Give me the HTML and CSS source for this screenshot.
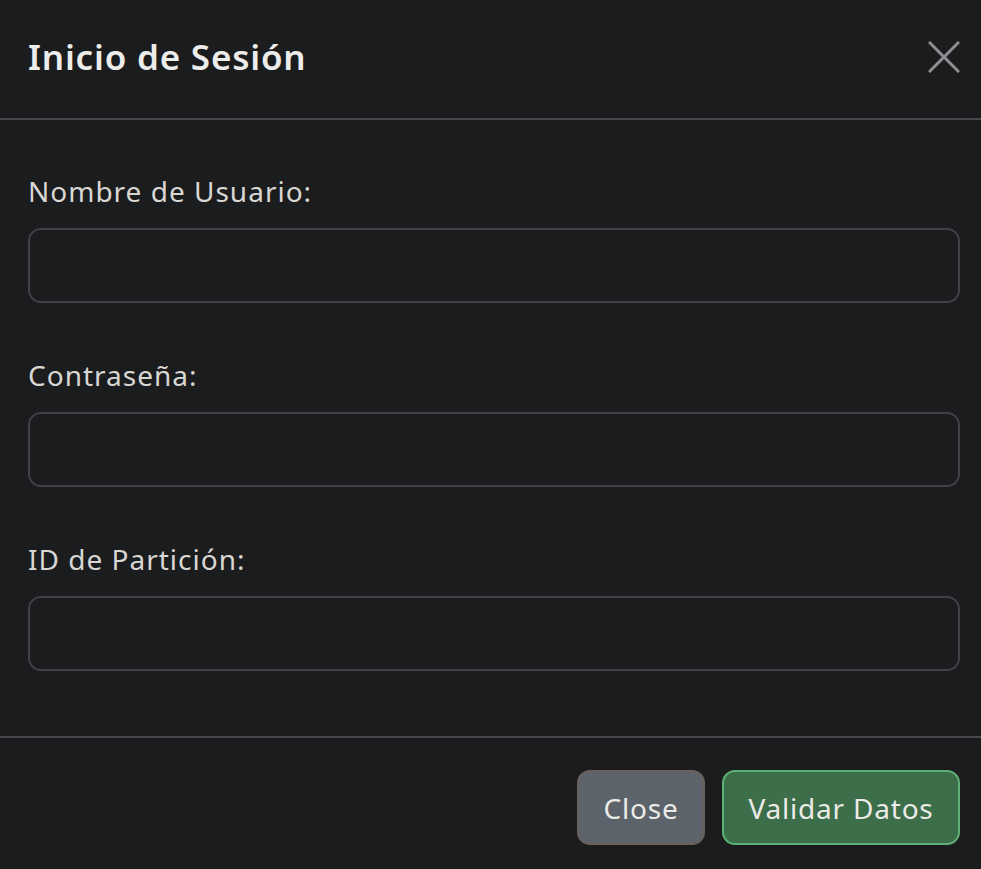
FILE: index.html
```html
<!DOCTYPE html>
<html lang="es">
<head>
<meta charset="utf-8">
<title>Inicio de Sesión</title>
<link rel="stylesheet" href="styles.css">
</head>
<body>
<div class="modal">
  <header class="modal-header">
    <h5 class="modal-title">Inicio de Sesión</h5>
    <button class="btn-close" type="button" aria-label="Close">
      <svg viewBox="0 0 32 32" width="32" height="32"><path d="M1 1L31 31M31 1L1 31" stroke="currentColor" stroke-width="3" fill="none"/></svg>
    </button>
  </header>
  <div class="modal-body">
    <div class="field">
      <label class="form-label" for="u">Nombre de Usuario:</label>
      <input class="form-control" id="u" type="text">
    </div>
    <div class="field">
      <label class="form-label" for="p">Contraseña:</label>
      <input class="form-control" id="p" type="password">
    </div>
    <div class="field">
      <label class="form-label" for="i">ID de Partición:</label>
      <input class="form-control" id="i" type="text">
    </div>
  </div>
  <footer class="modal-footer">
    <button class="btn btn-secondary" type="button">Close</button>
    <button class="btn btn-success" type="button">Validar Datos</button>
  </footer>
</div>
</body>
</html>
```
FILE: styles.css
```css
html, body {
  margin: 0;
  padding: 0;
  background: #1b1c1e;
  overflow: hidden;
}
body {
  font-family: "Noto Sans", "Open Sans", sans-serif;
  color: #dee2e6;
}
.modal {
  width: 981px;
  height: 869px;
  display: flex;
  flex-direction: column;
}
.modal-header {
  height: 120px;
  flex: none;
  box-sizing: border-box;
  border-bottom: 2px solid #45474a;
  display: flex;
  align-items: center;
  justify-content: space-between;
  padding: 0 21px 4px 28px;
}
.modal-title {
  margin: 0;
  font-size: 35px;
  font-weight: 600;
  letter-spacing: 0.8px;
  color: #ececea;
  line-height: 1;
  padding-bottom: 2px;
}
.btn-close {
  background: none;
  border: 0;
  padding: 0;
  color: #8d8e90;
  width: 32px;
  height: 32px;
  display: flex;
}
.modal-body {
  flex: none;
  padding: 52px 21px 0 28px;
  display: flex;
  flex-direction: column;
  gap: 53px;
  height: 618px;
  box-sizing: border-box;
  border-bottom: 2px solid #45474a;
}
.field {
  display: flex;
  flex-direction: column;
}
.form-label {
  font-size: 28px;
  line-height: 38px;
  margin-bottom: 18px;
  letter-spacing: 1px;
  color: #d9d7d3;
}
.form-control {
  height: 75px;
  box-sizing: border-box;
  border: 2px solid #3f4144;
  border-radius: 13px;
  background: #1b1c1e;
  margin: 0;
  width: 100%;
}
.modal-footer {
  display: flex;
  justify-content: flex-end;
  gap: 17px;
  padding: 32px 21px 0 28px;
}
.btn {
  height: 75px;
  box-sizing: border-box;
  border-radius: 13px;
  font-family: inherit;
  font-size: 28px;
  letter-spacing: 0.8px;
  color: #eceae6;
  padding: 0;
  border: 2px solid;
}
.btn-secondary {
  background: #5c636a;
  border-color: #6a625a;
  width: 128px;
}
.btn-success {
  background: #3d6e4a;
  border-color: #5fb074;
  width: 238px;
}
```
